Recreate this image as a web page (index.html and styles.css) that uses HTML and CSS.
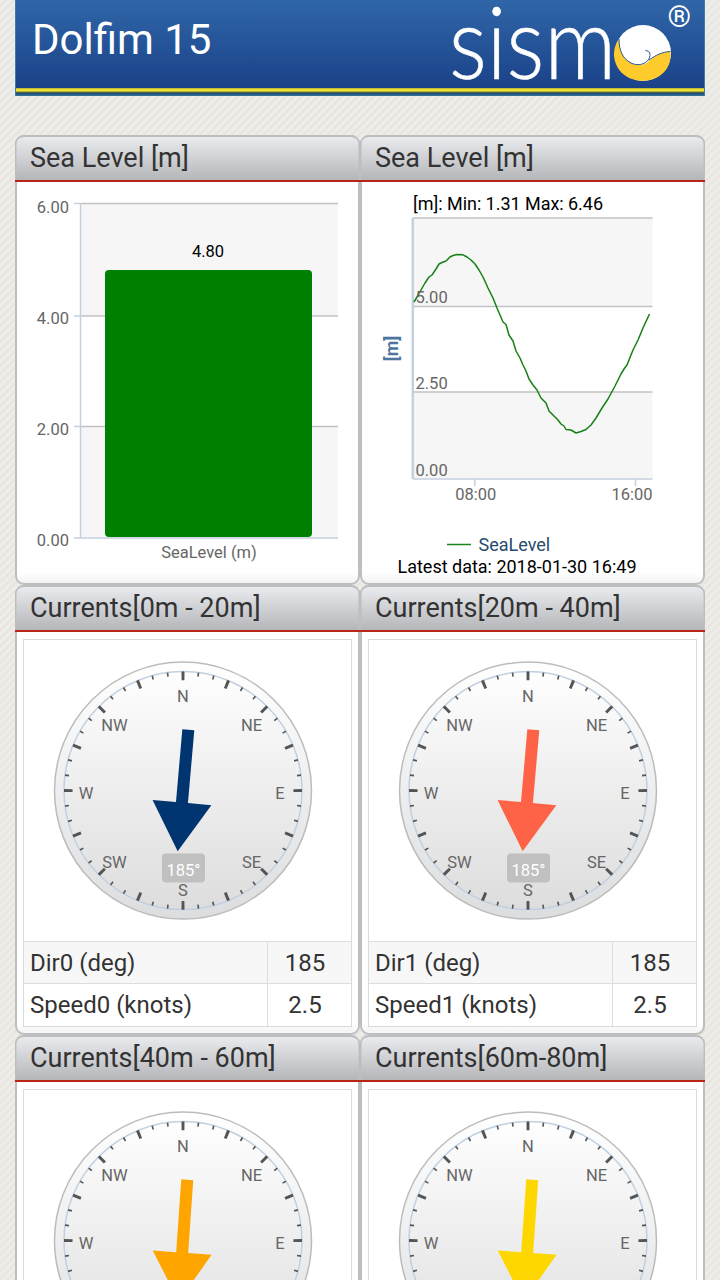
FILE: index.html
```html
<!DOCTYPE html>
<html lang="en">

<head>
    <meta charset="UTF-8">
    <meta name="viewport" content="width=device-width, initial-scale=1.0">
    <title>Dolfim 15</title>
    <link rel="stylesheet" href="styles.css">
</head>

<body>
    <!-- shared gauge parts -->
    <svg class="defs" width="0" height="0">
        <defs>
            <linearGradient id="rim" x1="0" y1="0" x2="0" y2="1">
                <stop offset="0" stop-color="#ffffff" />
                <stop offset="1" stop-color="#dcdddf" />
            </linearGradient>
            <linearGradient id="face" x1="0" y1="0" x2="0" y2="1">
                <stop offset="0" stop-color="#fefefe" />
                <stop offset="1" stop-color="#dddddd" />
            </linearGradient>
            <g id="dial">
                <circle class="rim" r="128.5" />
                <circle class="face" r="119" />
                <circle class="tick-minor" r="117" pathLength="360" />
                <circle class="tick-major" r="114.7" pathLength="360" />
                <g class="dial-text">
                    <text x="0" y="-89">N</text>
                    <text x="68.500" y="-60">NE</text>
                    <text x="97" y="8">E</text>
                    <text x="68.500" y="77">SE</text>
                    <text x="0" y="105">S</text>
                    <text x="-68.500" y="77">SW</text>
                    <text x="-97" y="8">W</text>
                    <text x="-68.500" y="-60">NW</text>
                </g>
            </g>
            <polygon id="arrow" points="-6,-61 6,-61 6,12 29.5,12 0,61 -29.5,12 -6,12" />
        </defs>
    </svg>

    <div class="page">
        <div class="header">
            <h1 class="title">Dolfim 15</h1>
            <svg class="logo" width="245" height="88" viewBox="445 0 245 88">
                <text class="logo-text" x="449" y="79" textLength="167" lengthAdjust="spacingAndGlyphs">sism</text>
                <circle cx="643" cy="53" r="28" fill="#fff" />
                <path d="M619 39C611 50 613 65 623 74C635 84 655 83 665 71C670 65 671 58 670.500 51C662 52 656 55 650 60C645 66 637 66 631 63C623 59 619 51 619 39Z" fill="#ffca2b" />
                <path d="M619 39C619 51 623 59 631 63C637 66 645 65 649 59C651 54 650 51 645.500 50.500" fill="none" stroke="#285a93" stroke-width="1" />
                <path d="M649 60C656 55 662 52 670.500 51.500" fill="none" stroke="#285a93" stroke-width="1" />
                <text class="logo-reg" x="667.500" y="27">®</text>
            </svg>
        </div>

        <div class="panels">
            <div class="panel">
                <h2 class="panel-title">Sea Level [m]</h2>
                <div class="panel-body">
                    <svg class="chart" width="341" height="390" viewBox="17 182 341 390">
                        <rect class="band" x="80" y="204" width="258" height="112" />
                        <rect class="band" x="80" y="427" width="258" height="111" />
                        <path class="grid" d="M80 203.500H338M80 316H338M80 426.500H338" />
                        <path class="axis" d="M80.500 203V538M74 203.500H80M74 316H80M74 426.500H80M74 538H338" />
                        <rect x="105" y="270" width="207" height="267" rx="4" fill="#008000" />
                        <g class="label end">
                            <text x="69" y="213">6.00</text>
                            <text x="69" y="324">4.00</text>
                            <text x="69" y="435">2.00</text>
                            <text x="69" y="546">0.00</text>
                        </g>
                        <text class="label dark mid" x="208" y="257">4.80</text>
                        <text class="label mid" x="209" y="558">SeaLevel (m)</text>
                    </svg>
                </div>
            </div>

            <div class="panel">
                <h2 class="panel-title">Sea Level [m]</h2>
                <div class="panel-body">
                    <svg class="chart" width="341" height="396" viewBox="362 182 341 396">
                        <text class="note" x="413" y="210" textLength="190">[m]: Min: 1.31 Max: 6.46</text>
                        <rect class="band" x="413" y="218" width="239.500" height="89" />
                        <rect class="band" x="413" y="392" width="239.500" height="87" />
                        <path class="grid" d="M413 218H652.500M413 306.500H652.500M413 392H652.500" />
                        <path class="axis" d="M413 479H652.500M474.800 479V486M635.500 479V486" />
                        <path class="axis thick" d="M412.800 218V479" />
                        <path class="series" d="M414 302L417 297L421 290L425 283L429 277L432 275L436 269L439 264L442 262.500L446 261L450 257L453 255.500L457 254.600L463 254.800L467 257L471 260L475 264L479 270L483 277L488 288L493 298L497 308L503 322L506 324.500L509 335L513 341L516 351L520 358L523 365L526 371L529 379L533 385L537 390L541 398L546 403L549 411L554 416L558 420L561 424L564 426L566 429.500L571 430L576 433L581 431.500L586 429.500L591 425L596 418L602 408L608 399L615 386L621 374L624 369L627 365L633 350L638 340L643 328L649.500 314" />
                        <g class="label">
                            <text x="415.500" y="303">5.00</text>
                            <text x="415.500" y="389">2.50</text>
                            <text x="415.500" y="476">0.00</text>
                        </g>
                        <text class="label mid" x="475.700" y="500">08:00</text>
                        <text class="label mid" x="632" y="500">16:00</text>
                        <text class="axis-title" transform="translate(398 348.500) rotate(-90)">[m]</text>
                        <path d="M447 544.500H471" stroke="#1a861a" stroke-width="1.500" />
                        <text class="legend" x="478.500" y="551">SeaLevel</text>
                        <text class="note" x="397.500" y="573" textLength="239">Latest data: 2018-01-30 16:49</text>
                    </svg>
                </div>
            </div>

            <div class="panel">
                <h2 class="panel-title">Currents[0m - 20m]</h2>
                <div class="panel-body">
                    <div class="current">
                        <svg class="gauge" width="327" height="301" viewBox="-159 -150.600 327 301">
                            <use href="#dial" />
                            <rect class="badge" x="-21" y="63" width="43" height="29" rx="4" />
                            <text class="badge-text" x="0.500" y="85">185°</text>
                            <use href="#arrow" transform="rotate(5)" fill="#003570" />
                        </svg>
                        <div class="row odd">
                            <span class="name">Dir0 (deg)</span>
                            <span class="value">185</span>
                        </div>
                        <div class="row">
                            <span class="name">Speed0 (knots)</span>
                            <span class="value">2.5</span>
                        </div>
                    </div>
                </div>
            </div>

            <div class="panel">
                <h2 class="panel-title">Currents[20m - 40m]</h2>
                <div class="panel-body">
                    <div class="current">
                        <svg class="gauge" width="327" height="301" viewBox="-159 -150.600 327 301">
                            <use href="#dial" />
                            <rect class="badge" x="-21" y="63" width="43" height="29" rx="4" />
                            <text class="badge-text" x="0.500" y="85">185°</text>
                            <use href="#arrow" transform="rotate(5)" fill="#ff6347" />
                        </svg>
                        <div class="row odd">
                            <span class="name">Dir1 (deg)</span>
                            <span class="value">185</span>
                        </div>
                        <div class="row">
                            <span class="name">Speed1 (knots)</span>
                            <span class="value">2.5</span>
                        </div>
                    </div>
                </div>
            </div>

            <div class="panel">
                <h2 class="panel-title">Currents[40m - 60m]</h2>
                <div class="panel-body">
                    <div class="current">
                        <svg class="gauge" width="327" height="301" viewBox="-159 -150.600 327 301">
                            <use href="#dial" />
                            <use href="#arrow" transform="rotate(4)" fill="#ffa500" />
                        </svg>
                    </div>
                </div>
            </div>

            <div class="panel">
                <h2 class="panel-title">Currents[60m-80m]</h2>
                <div class="panel-body">
                    <div class="current">
                        <svg class="gauge" width="327" height="301" viewBox="-159 -150.600 327 301">
                            <use href="#dial" />
                            <use href="#arrow" transform="rotate(4)" fill="#ffd700" />
                        </svg>
                    </div>
                </div>
            </div>
        </div>
    </div>
</body>

</html>
```

FILE: styles.css
```css
html,
body {
    padding: 0;
    margin: 0;
}

body {
    font-family: Roboto, "Liberation Sans", sans-serif;
    color: #333;
    background: repeating-linear-gradient(135deg, #edece8 0, #edece8 3px, #e5e4dd 4px, #e5e4dd 5px, #edece8 5.66px);
}

.defs {
    display: block;
}

.page {
    width: 690px;
    height: 1280px;
    margin: 0 auto;
    overflow: hidden;
}

/* header */
.header {
    height: 96px;
    display: flex;
    justify-content: space-between;
    box-sizing: border-box;
    border: solid #3f7fa5;
    border-width: 0 1px;
    background: linear-gradient(#2f66a8 0, #1b4288 88px, #8d9340 88px, #f0e02e 89px, #f0e02e 91px, #77803a 92px, #1d4468 93px, #3578a0 96px);
}

.title {
    margin: 0;
    padding: 15px 0 0 16px;
    font-size: 42px;
    line-height: 50px;
    font-weight: 400;
    color: #fff;
}

.logo {
    margin-right: 14px;
}

.logo-text {
    font-family: Lato, sans-serif;
    font-weight: 300;
    font-size: 100px;
    fill: #fff;
    stroke: #fff;
    stroke-width: .6;
}

.logo-reg {
    font-size: 30px;
    fill: #fff;
}

/* panels */
.panels {
    display: grid;
    grid-template-columns: 345px 345px;
    grid-auto-rows: 450px;
    padding-top: 39px;
}

.panel {
    box-sizing: border-box;
    display: flex;
    flex-direction: column;
    border: 2px solid #bdbec0;
    border-radius: 9px;
    background: linear-gradient(#fff 435px, #f3f3f3);
}

.panel-title {
    margin: -2px -2px 0;
    height: 45px;
    padding-left: 15px;
    font-size: 27px;
    line-height: 46px;
    font-weight: 400;
    border-bottom: 2px solid #b92419;
    border-radius: 9px 9px 0 0;
    background: linear-gradient(#ecedf0, #b5b6ba);
    box-shadow: inset 0 2px #bdbec0, inset 1.5px 0 #bdbec0, inset -1.5px 0 #bdbec0;
}

.panel-body {
    flex: 1;
}

.chart {
    display: block;
}

.band {
    fill: #f6f6f6;
}

.grid {
    fill: none;
    stroke: #c2c2c4;
    stroke-width: 1.5;
}

.axis {
    fill: none;
    stroke: #c3d0e0;
    stroke-width: 1.5;
}

.axis.thick {
    stroke-width: 2.5;
}

.series {
    fill: none;
    stroke: #168016;
    stroke-width: 1.5;
    stroke-linejoin: round;
}

.label {
    font-size: 16.5px;
    fill: #666;
}

.end {
    text-anchor: end;
}

.mid {
    text-anchor: middle;
}

.dark {
    fill: #000;
}

.note {
    font-size: 18px;
    fill: #000;
}

.axis-title {
    font-size: 18px;
    font-weight: 700;
    text-anchor: middle;
    fill: #4d759e;
}

.legend {
    font-size: 18px;
    fill: #274b6d;
}

/* currents */
.current {
    margin: 7px 6px 0;
    border: 1px solid #d8dcda;
    background: #fff;
}

.gauge {
    display: block;
}

.rim {
    fill: url(#rim);
    stroke: #bcbcbc;
    stroke-width: 1.5;
}

.face {
    fill: url(#face);
    stroke: #c0d0e0;
    stroke-width: 1.5;
}

.tick-minor,
.tick-major {
    fill: none;
    stroke: #555;
}

.tick-minor {
    stroke-width: 4;
    stroke-dasharray: .8 6.7;
    stroke-dashoffset: .4;
}

.tick-major {
    stroke-width: 8.5;
    stroke-dasharray: 1.5 21;
    stroke-dashoffset: .75;
}

.dial-text {
    font-size: 16.5px;
    text-anchor: middle;
    fill: #666;
}

.badge {
    fill: #c0c0c0;
}

.badge-text {
    font-size: 16.5px;
    text-anchor: middle;
    fill: #fff;
}

.row {
    display: flex;
    height: 42px;
    line-height: 42px;
    font-size: 24px;
    border-top: 1px solid #ddd;
}

.odd {
    height: 41px;
    background: #f7f7f7;
}

.name {
    width: 237px;
    padding-left: 6px;
    border-right: 1px solid #ddd;
}

.value {
    flex: 1;
    padding-right: 9px;
    text-align: center;
}
```
